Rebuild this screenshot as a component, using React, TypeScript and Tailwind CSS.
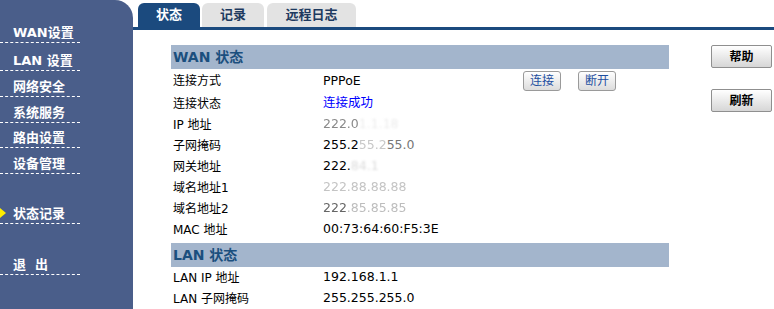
const navItems = [
  { label: 'WAN设置', cls: 'h-[43px]' },
  { label: 'LAN 设置', cls: 'h-[28px]' },
  { label: '网络安全', cls: 'h-[26px]' },
  { label: '系统服务', cls: 'h-[26px]' },
  { label: '路由设置', cls: 'h-[25px]' },
  { label: '设备管理', cls: 'h-[26px]' },
  { label: '状态记录', cls: 'h-[50px]', active: true },
  { label: '退\u2002\u2009出', cls: 'h-[51px]' },
]

const tabs = [
  { label: '状态', cls: 'w-[62px] bg-[#1b4a7e] text-white' },
  { label: '记录', cls: 'w-[62px] bg-[#e3e3e3] text-[#1e3a5f]' },
  { label: '远程日志', cls: 'w-[89px] bg-[#e3e3e3] text-[#1e3a5f]' },
]

function Row({ label, children }: { label: string; children: React.ReactNode }) {
  return (
    <div className="flex h-[21px] items-center">
      <div className="w-[152px] pl-[2px]">{label}</div>
      <div className="text-[12.5px]">{children}</div>
    </div>
  )
}

function SectionBar({ title, cls = '' }: { title: string; cls?: string }) {
  return (
    <div className={`flex h-[24px] items-center bg-[#a3b5cc] pl-[2px] text-[14px] font-bold text-[#1b4f7e] ${cls}`}>
      {title}
    </div>
  )
}

function SmallButton({ label }: { label: string }) {
  return (
    <button className="h-[20px] w-[38px] rounded-[3px] border border-[#9a9a9a] bg-gradient-to-b from-white to-[#dcdcdc] text-[12px] leading-none text-[#1d4ea0]">
      {label}
    </button>
  )
}

function SideButton({ label }: { label: string }) {
  return (
    <button className="h-[23px] w-[61px] rounded-[2px] border border-[#8f8f8f] bg-gradient-to-b from-white to-[#d6d6d6] text-[12px] font-bold leading-none text-black">
      {label}
    </button>
  )
}

export default function App() {
  return (
    <div
      className="flex h-[309px] w-[774px] overflow-hidden bg-white text-[12px] text-black"
      style={{ fontFamily: '"DejaVu Sans", "Noto Sans CJK SC", sans-serif' }}
    >
      <aside className="w-[133px] shrink-0 rounded-tr-[18px] bg-[#4a5e8a]">
        {navItems.map((item) => (
          <div key={item.label} className={`relative flex w-[80px] items-end border-b border-dashed border-white pb-[1px] ${item.cls}`}>
            {item.active && (
              <span className="absolute left-0 bottom-[5px] h-0 w-0 border-y-[5px] border-l-[6px] border-y-transparent border-l-[#ffee00]" />
            )}
            <span className="pl-[13px] text-[13px] font-bold leading-[16px] text-white">{item.label}</span>
          </div>
        ))}
      </aside>

      <main className="flex flex-1 flex-col">
        <div className="flex h-[30px] items-end gap-[2px] border-b-[3px] border-[#1b4a7e] pl-[5px]">
          {tabs.map((t, i) => (
            <div
              key={t.label}
              className={`flex h-[24px] items-center justify-center rounded-t-[6px] text-[13px] font-bold ${t.cls} ${i === 2 ? 'ml-[1px]' : ''}`}
            >
              {t.label}
            </div>
          ))}
        </div>

        <div className="flex pt-[15px]">
          <div className="ml-[38px] w-[498px]">
            <SectionBar title="WAN 状态" />
            <div className="flex h-[24px] items-center">
              <div className="w-[152px] pl-[2px]">连接方式</div>
              <div className="w-[200px] text-[12.5px]">PPPoE</div>
              <div className="flex gap-[17px]">
                <SmallButton label="连接" />
                <SmallButton label="断开" />
              </div>
            </div>
            <Row label="连接状态">
              <span className="text-[#0000ff]">连接成功</span>
            </Row>
            <Row label="IP 地址">
              <span className="text-[#8a8a8a] blur-[0.5px]">222.0</span>
              <span className="text-[#ececec] blur-[1px]">1.1.18</span>
            </Row>
            <Row label="子网掩码">
              <span>255.2</span>
              <span className="text-[#c8c8c8] blur-[0.6px]">55.2</span>
              <span className="text-[#777]">55.0</span>
            </Row>
            <Row label="网关地址">
              <span>222.</span>
              <span className="text-[#dcdcdc] blur-[1px]">84.1</span>
            </Row>
            <Row label="域名地址1">
              <span className="text-[#c4c4c4] blur-[0.5px]">222.88.88.88</span>
            </Row>
            <Row label="域名地址2">
              <span className="text-[#666] blur-[0.4px]">222</span>
              <span className="text-[#bdbdbd] blur-[0.5px]">.85.85.85</span>
            </Row>
            <Row label="MAC 地址">00:73:64:60:F5:3E</Row>
            <SectionBar title="LAN 状态" cls="mt-[3px]" />
            <Row label="LAN IP 地址">192.168.1.1</Row>
            <Row label="LAN 子网掩码">255.255.255.0</Row>
          </div>

          <div className="ml-[42px] flex flex-col gap-[21px]">
            <SideButton label="帮助" />
            <SideButton label="刷新" />
          </div>
        </div>
      </main>
    </div>
  )
}
